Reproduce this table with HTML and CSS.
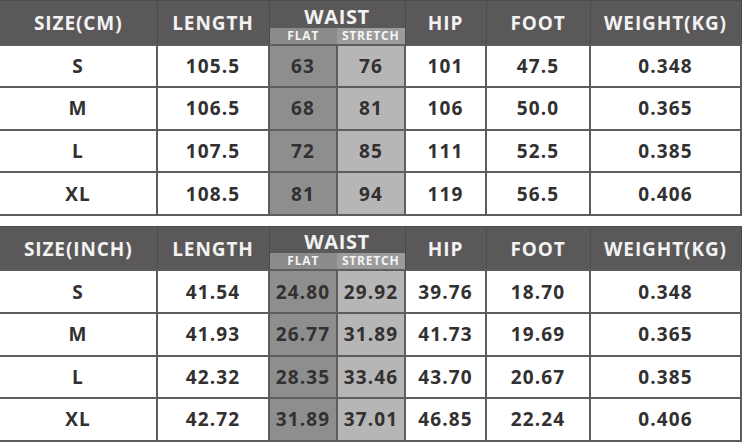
FILE: index.html
```html
<!DOCTYPE html>
<html>
<head>
<meta charset="utf-8">
<link rel="stylesheet" href="styles.css">
</head>
<body>
<div class="page">
  <table class="size-table">
    <colgroup>
      <col class="c-size"><col class="c-length"><col class="c-flat"><col class="c-stretch"><col class="c-hip"><col class="c-foot"><col class="c-weight">
    </colgroup>
    <thead>
      <tr class="h1">
        <th rowspan="2">SIZE(CM)</th>
        <th rowspan="2">LENGTH</th>
        <th colspan="2" class="waist">WAIST</th>
        <th rowspan="2">HIP</th>
        <th rowspan="2">FOOT</th>
        <th rowspan="2">WEIGHT(KG)</th>
      </tr>
      <tr class="h2">
        <th class="sub-flat">FLAT</th>
        <th class="sub-stretch">STRETCH</th>
      </tr>
    </thead>
    <tbody>
      <tr><td>S</td><td>105.5</td><td class="flat">63</td><td class="stretch">76</td><td>101</td><td>47.5</td><td>0.348</td></tr>
      <tr><td>M</td><td>106.5</td><td class="flat">68</td><td class="stretch">81</td><td>106</td><td>50.0</td><td>0.365</td></tr>
      <tr><td>L</td><td>107.5</td><td class="flat">72</td><td class="stretch">85</td><td>111</td><td>52.5</td><td>0.385</td></tr>
      <tr><td>XL</td><td>108.5</td><td class="flat">81</td><td class="stretch">94</td><td>119</td><td>56.5</td><td>0.406</td></tr>
    </tbody>
  </table>
  <table class="size-table">
    <colgroup>
      <col class="c-size"><col class="c-length"><col class="c-flat"><col class="c-stretch"><col class="c-hip"><col class="c-foot"><col class="c-weight">
    </colgroup>
    <thead>
      <tr class="h1">
        <th rowspan="2">SIZE(INCH)</th>
        <th rowspan="2">LENGTH</th>
        <th colspan="2" class="waist">WAIST</th>
        <th rowspan="2">HIP</th>
        <th rowspan="2">FOOT</th>
        <th rowspan="2">WEIGHT(KG)</th>
      </tr>
      <tr class="h2">
        <th class="sub-flat">FLAT</th>
        <th class="sub-stretch">STRETCH</th>
      </tr>
    </thead>
    <tbody>
      <tr><td>S</td><td>41.54</td><td class="flat">24.80</td><td class="stretch">29.92</td><td>39.76</td><td>18.70</td><td>0.348</td></tr>
      <tr><td>M</td><td>41.93</td><td class="flat">26.77</td><td class="stretch">31.89</td><td>41.73</td><td>19.69</td><td>0.365</td></tr>
      <tr><td>L</td><td>42.32</td><td class="flat">28.35</td><td class="stretch">33.46</td><td>43.70</td><td>20.67</td><td>0.385</td></tr>
      <tr><td>XL</td><td>42.72</td><td class="flat">31.89</td><td class="stretch">37.01</td><td>46.85</td><td>22.24</td><td>0.406</td></tr>
    </tbody>
  </table>
</div>
</body>
</html>
```

FILE: styles.css
```css
html, body {
  margin: 0;
  padding: 0;
  background: #ffffff;
}

.page {
  display: flex;
  flex-direction: column;
  gap: 10px;
  width: 742px;
  font-family: "Open Sans", "DejaVu Sans", sans-serif;
}

.size-table {
  border-collapse: collapse;
  table-layout: fixed;
  width: 741px;
}

.c-size { width: 157px; }
.c-length { width: 112px; }
.c-flat { width: 68px; }
.c-stretch { width: 68px; }
.c-hip { width: 81px; }
.c-foot { width: 104px; }
.c-weight { width: 151px; }

.size-table th,
.size-table td {
  padding: 0;
  text-align: center;
  font-weight: 700;
  white-space: nowrap;
}

.size-table th {
  background: #5a5858;
  color: #f2f2f2;
  font-size: 19px;
  letter-spacing: 0.9px;
  border-left: 1px solid #4c4a4a;
  border-right: 1px solid #4c4a4a;
  border-top: 1px solid #4c4a4a;
}

.size-table th:first-child { border-left: none; }

.h1 { height: 27px; }
.h2 { height: 16px; }

.h1 th { padding-top: 2px; }

.size-table th.waist {
  font-size: 20px;
  letter-spacing: 0.6px;
  line-height: 22px;
  padding-top: 0;
  vertical-align: bottom;
  border-bottom: none;
}

.size-table th.sub-flat,
.size-table th.sub-stretch {
  font-size: 12px;
  line-height: 16px;
  letter-spacing: 0.8px;
  border: none;
  color: #f4f4f4;
}

.size-table th.sub-flat { background: #8b8b8b; }
.size-table th.sub-stretch { background: #9b9b9b; border-right: 1px solid #4c4a4a; }

.size-table td {
  height: 40.6px;
  font-size: 19px;
  letter-spacing: 1.1px;
  color: #323030;
  border: 2px solid #5e5c5c;
  background: #ffffff;
}

.size-table td:first-child { border-left: none; }

.size-table td.flat { background: #8e8e8e; }
.size-table td.stretch { background: #b6b6b6; }
```
